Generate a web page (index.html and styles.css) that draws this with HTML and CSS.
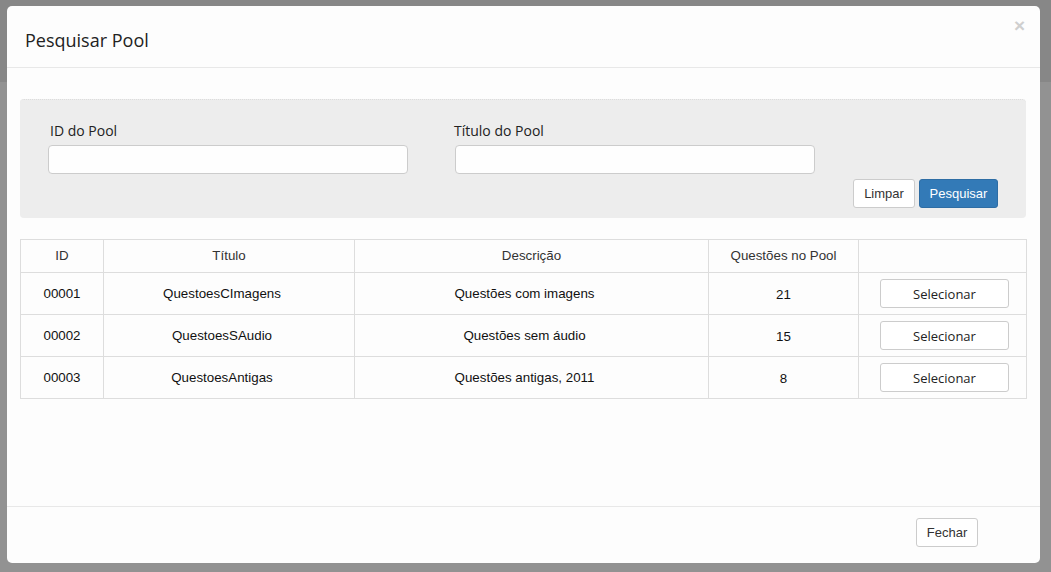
FILE: index.html
```html
<!DOCTYPE html>
<html lang="pt">
<head>
<meta charset="utf-8">
<title>Pesquisar Pool</title>
<link rel="stylesheet" href="styles.css">
</head>
<body>
<div class="modal">
  <div class="modal-header">
    <h4 class="modal-title">Pesquisar Pool</h4>
    <span class="close">×</span>
  </div>
  <div class="modal-body">
    <div class="filter-panel">
      <div class="fields">
        <div class="field">
          <label class="field-label field-label-first">ID do Pool</label>
          <input class="field-input" type="text">
        </div>
        <div class="field">
          <label class="field-label">Título do Pool</label>
          <input class="field-input" type="text">
        </div>
      </div>
      <div class="actions">
        <button class="btn btn-default btn-limpar">Limpar</button>
        <button class="btn btn-primary">Pesquisar</button>
      </div>
    </div>
    <table class="results">
      <thead>
        <tr>
          <th class="c-id">ID</th>
          <th class="c-title">Título</th>
          <th class="c-desc">Descrição</th>
          <th class="c-count">Questões no Pool</th>
          <th class="c-action"></th>
        </tr>
      </thead>
      <tbody>
        <tr>
          <td>00001</td>
          <td class="shifted">QuestoesCImagens</td>
          <td class="shifted">Questões com imagens</td>
          <td class="num">21</td>
          <td><button class="btn-select">Selecionar</button></td>
        </tr>
        <tr>
          <td>00002</td>
          <td class="shifted">QuestoesSAudio</td>
          <td class="shifted">Questões sem áudio</td>
          <td class="num">15</td>
          <td><button class="btn-select">Selecionar</button></td>
        </tr>
        <tr>
          <td>00003</td>
          <td class="shifted">QuestoesAntigas</td>
          <td class="shifted">Questões antigas, 2011</td>
          <td class="num">8</td>
          <td><button class="btn-select">Selecionar</button></td>
        </tr>
      </tbody>
    </table>
  </div>
  <div class="modal-footer">
    <button class="btn btn-default btn-fechar">Fechar</button>
  </div>
</div>
</body>
</html>
```
FILE: styles.css
```css
html, body {
  margin: 0;
  padding: 0;
}
body {
  width: 1051px;
  height: 572px;
  overflow: hidden;
  background: linear-gradient(#878787 0, #878787 82px, #929292 82px, #929292 100%);
  font-family: "Liberation Sans", Arial, sans-serif;
  color: #333;
  padding-top: 6px;
  box-sizing: border-box;
}
.modal {
  margin-left: 7px;
  width: 1033px;
  height: 557px;
  background: #fdfdfd;
  border-radius: 5px;
  display: flex;
  flex-direction: column;
}
.modal-header {
  height: 62px;
  box-sizing: border-box;
  border-bottom: 1px solid #e8e8e8;
  display: flex;
  justify-content: space-between;
  align-items: flex-start;
  padding: 0 15px 0 18px;
  flex: none;
}
.modal-title {
  margin: 22px 0 0 0;
  font-family: "Open Sans", "Noto Sans", sans-serif;
  font-weight: 400;
  font-size: 18px;
  line-height: 24px;
  color: #222;
}
.close {
  margin-top: 10px;
  font-family: "Liberation Sans", Arial, sans-serif;
  font-size: 19px;
  font-weight: 700;
  line-height: 20px;
  color: #cfcfcf;
}
.modal-body {
  flex: 1;
  padding: 31px 14px 0 13px;
}
.filter-panel {
  background: #ededed;
  border-top: 1px dotted #dcdcdc;
  border-radius: 4px;
  padding: 21px 28px 10px 28px;
  height: 119px;
  box-sizing: border-box;
}
.fields {
  display: flex;
  gap: 47px;
}
.field {
  display: flex;
  flex-direction: column;
}
.field-label {
  font-family: "Open Sans", "Noto Sans", sans-serif;
  font-size: 14px;
  line-height: 20px;
  color: #222;
  margin-left: -1px;
  margin-bottom: 4px;
}
.field-label-first {
  margin-left: 2px;
}
.field-input {
  width: 360px;
  height: 29px;
  box-sizing: border-box;
  border: 1px solid #cccccc;
  border-radius: 4px;
  background: #fefefe;
  margin: 0;
}
.actions {
  display: flex;
  justify-content: flex-end;
  gap: 4px;
  margin-top: 5px;
}
.btn {
  height: 29px;
  box-sizing: border-box;
  border-radius: 3px;
  font-family: "Liberation Sans", Arial, sans-serif;
  font-size: 13px;
  padding: 0;
  border: 1px solid #cccccc;
  background: #ffffff;
  color: #333;
}
.btn-limpar {
  width: 62px;
}
.btn-primary {
  width: 79px;
  background: #337ab7;
  border-color: #2e6da4;
  color: #fff;
}
.results {
  margin-top: 21px;
  width: 1006px;
  border-collapse: collapse;
  table-layout: fixed;
  font-size: 13.33px;
}
.results th, .results td {
  border: 1px solid #dddddd;
  text-align: center;
  padding: 0;
  font-weight: 400;
  line-height: 16px;
}
.results th {
  height: 32px;
  color: #333;
}
.results td {
  height: 41px;
  color: #111;
  vertical-align: middle;
}
.results td.shifted {
  padding-right: 14px;
}
.results td.num {
  height: 38px;
  padding-top: 3px;
}
.c-id { width: 82px; }
.c-title { width: 250px; }
.c-desc { width: 353px; }
.c-count { width: 149px; }
.c-action { width: 167px; }
.btn-select {
  display: block;
  width: 129px;
  height: 29px;
  border: 1px solid #cccccc;
  border-radius: 3px;
  background: #ffffff;
  font-family: "Open Sans", "Noto Sans", sans-serif;
  font-size: 13px;
  color: #222;
  margin: 0 0 0 21px;
  padding: 0;
}
.modal-footer {
  height: 57px;
  box-sizing: border-box;
  border-top: 1px solid #e8e8e8;
  display: flex;
  justify-content: flex-end;
  align-items: flex-start;
  padding: 11px 62px 0 0;
  flex: none;
}
.btn-fechar {
  width: 62px;
}
```
